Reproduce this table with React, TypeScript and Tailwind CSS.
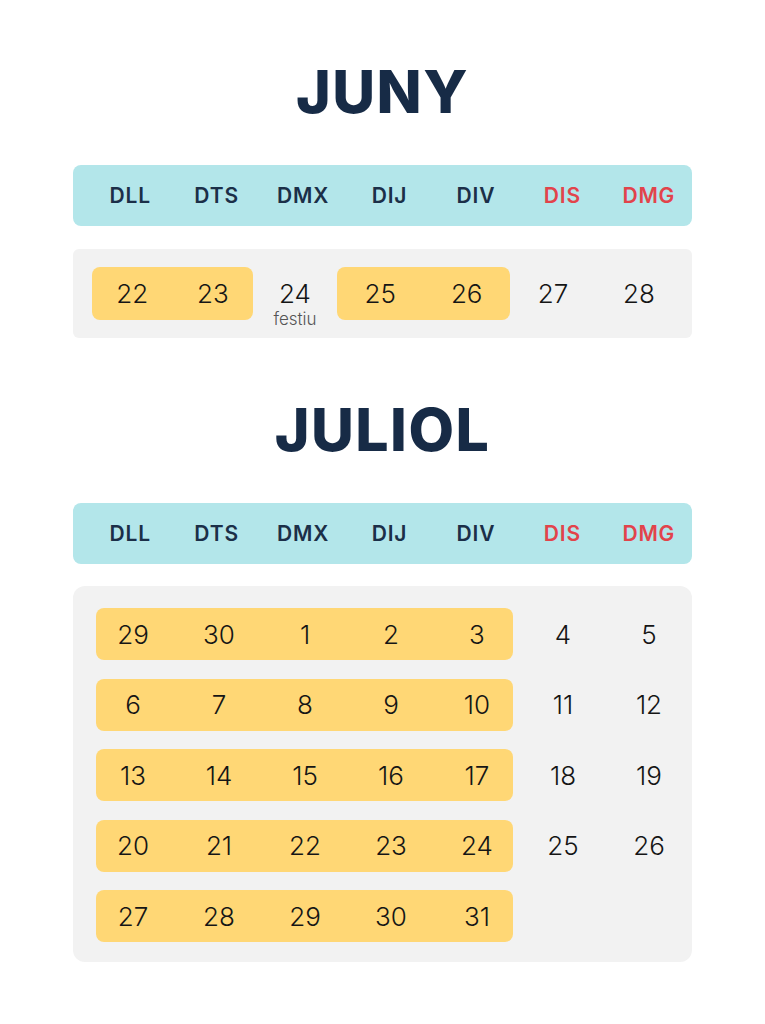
import React from 'react';

const DAYS = ['DLL', 'DTS', 'DMX', 'DIJ', 'DIV', 'DIS', 'DMG'];

const JULIOL_ROWS: [string[], string[]][] = [
  [['29', '30', '1', '2', '3'], ['4', '5']],
  [['6', '7', '8', '9', '10'], ['11', '12']],
  [['13', '14', '15', '16', '17'], ['18', '19']],
  [['20', '21', '22', '23', '24'], ['25', '26']],
  [['27', '28', '29', '30', '31'], []],
];

const font = { fontFamily: 'Inter, "Noto Sans", sans-serif' };

const Title: React.FC<{ children: React.ReactNode }> = ({ children }) => (
  <h1 className="text-center text-[59px] font-extrabold leading-none text-[#172b46] tracking-[0.025em]">
    {children}
  </h1>
);

const DayHeader: React.FC = () => (
  <div className="w-[619px] h-[61px] rounded-lg bg-[#b3e6ea] grid grid-cols-7 items-center pl-[14px]">
    {DAYS.map((d, i) => (
      <div
        key={d}
        className={`text-center text-[21px] font-semibold tracking-[0.04em] ${i >= 5 ? 'text-[#e2434b]' : 'text-[#1b2f48]'}`}
      >
        {d}
      </div>
    ))}
  </div>
);

const Num: React.FC<{ n: string; className?: string }> = ({ n, className }) => (
  <div className={`text-center text-[26px] font-light text-[#151515] ${className ?? ''}`}>{n}</div>
);

export default function App() {
  return (
    <div className="w-[765px] h-[1024px] bg-white flex flex-col items-center" style={font}>
      {/* Juny */}
      <div className="mt-[62px]">
        <Title>JUNY</Title>
      </div>
      <div className="mt-[44px]">
        <DayHeader />
      </div>
      <div className="mt-[23px] w-[619px] h-[89px] rounded-md bg-[#f2f2f2] flex items-center pl-[19px]">
        <div className="w-[161px] h-[53px] rounded-lg bg-[#ffd775] flex items-center justify-around">
          <Num n="22" />
          <Num n="23" />
        </div>
        <div className="relative w-[84px]">
          <Num n="24" className="leading-[30px]" />
          <div className="absolute left-0 right-0 top-[32px] text-center text-[17px] leading-none font-light text-[#555555]">
            festiu
          </div>
        </div>
        <div className="w-[173px] h-[53px] rounded-lg bg-[#ffd775] flex items-center justify-around">
          <Num n="25" />
          <Num n="26" />
        </div>
        <Num n="27" className="w-[86px]" />
        <Num n="28" className="w-[86px]" />
      </div>

      {/* Juliol */}
      <div className="mt-[62px]">
        <Title>JULIOL</Title>
      </div>
      <div className="mt-[44px]">
        <DayHeader />
      </div>
      <div className="mt-[22px] w-[619px] rounded-xl bg-[#f2f2f2] pt-[22px] pb-[20px] flex flex-col gap-[18.5px]">
        {JULIOL_ROWS.map(([week, weekend], r) => (
          <div key={r} className="flex items-center pl-[23px]">
            <div className="w-[417px] h-[52px] rounded-lg bg-[#ffd775] flex items-center">
              <div className="flex -ml-[6px]">
                {week.map((n) => (
                  <Num key={n + r} n={n} className="w-[86px]" />
                ))}
              </div>
            </div>
            <div className="flex ml-[7px]">
              {weekend.map((n) => (
                <Num key={n} n={n} className="w-[86px]" />
              ))}
            </div>
          </div>
        ))}
      </div>
    </div>
  );
}
